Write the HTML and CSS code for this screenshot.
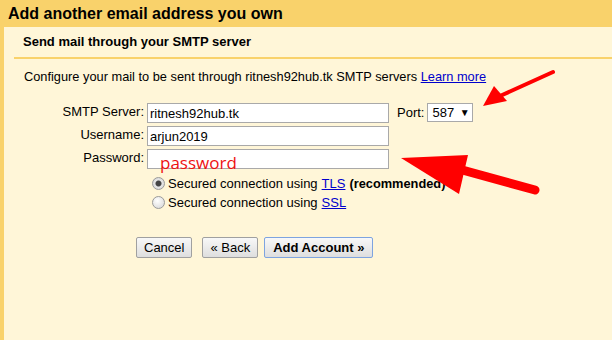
FILE: index.html
```html
<!DOCTYPE html>
<html lang="en">
<head>
  <meta charset="UTF-8">
  <title>Add another email address you own</title>
  <link rel="stylesheet" href="styles.css">
</head>
<body>

  <div class="page">
    <div class="header">Add another email address you own</div>

    <div class="content">
      <div class="subhead">Send mail through your SMTP server</div>

      <p class="intro">Configure your mail to be sent through ritnesh92hub.tk SMTP servers <a href="#">Learn more</a></p>

      <div class="form">
        <label class="label">SMTP Server:</label>
        <div class="field"><input type="text" value="ritnesh92hub.tk"></div>
        <div class="port">
          <label>Port:</label>
          <div class="select">587 <span class="caret">&#9660;</span></div>
        </div>

        <label class="label">Username:</label>
        <div class="field"><input type="text" value="arjun2019"></div>
        <div></div>

        <label class="label">Password:</label>
        <div class="field"><input type="text" value=""></div>
        <div></div>

        <div></div>
        <div class="options">
          <div class="radio-row"><span class="radio checked"></span>Secured connection using <a href="#">TLS</a> <b>(recommended)</b></div>
          <div class="radio-row"><span class="radio"></span>Secured connection using <a href="#">SSL</a></div>
        </div>
        <div></div>
      </div>

      <div class="buttons">
        <button class="btn">Cancel</button>
        <button class="btn back">&laquo; Back</button>
        <button class="btn primary">Add Account &raquo;</button>
      </div>
    </div>

    <!-- annotations drawn on top of the screenshot -->
    <span class="note">password</span>
    <svg class="arrows" width="612" height="340" viewBox="0 0 612 340">
      <line x1="553" y1="72" x2="500" y2="96" stroke="#ff0000" stroke-width="4" stroke-linecap="round"/>
      <polygon points="483,106 494,86 507,101" fill="#ff0000"/>
      <line x1="535" y1="190" x2="455" y2="168" stroke="#ff0000" stroke-width="9" stroke-linecap="round"/>
      <polygon points="401,158 468,155 459,194" fill="#ff0000"/>
    </svg>
  </div>

</body>
</html>
```

FILE: styles.css
```css
body {
  margin: 0;
  font-family: 'Liberation Sans', Arial, sans-serif;
  font-size: 13px;
  color: #000;
  background: #fff6d8;
}

.page {
  position: relative;
  height: 340px;
  border-left: 4px solid #f9d26b;
  background: #fff6d8;
  overflow: hidden;
}

.header {
  height: 27px;
  line-height: 28px;
  margin-left: -4px;
  padding-left: 8px;
  background: #f9d26b;
  font-size: 16px;
  font-weight: bold;
}

.subhead {
  margin-left: 10px;
  padding: 7px 0 8px 9px;
  border-bottom: 2px solid #f9d26b;
  font-size: 13px;
  font-weight: bold;
}

.intro {
  margin: 9px 0 0 20px;
  line-height: 18px;
  font-size: 12.8px;
}

a {
  color: #0000cc;
}

.form {
  display: grid;
  grid-template-columns: 140px 242px auto;
  column-gap: 3px;
  row-gap: 3px;
  margin-top: 17px;
  align-items: start;
}

.label {
  text-align: right;
  line-height: 18px;
}

.field input {
  box-sizing: border-box;
  width: 242px;
  height: 20px;
  margin: 0;
  padding: 0 2px;
  border: 1px solid #a9a9a9;
  background: #fff;
  font-family: 'Liberation Sans', Arial, sans-serif;
  font-size: 13px;
}

.port {
  display: flex;
  align-items: center;
  gap: 3px;
  margin-left: 5px;
}

.select {
  box-sizing: border-box;
  width: 46px;
  height: 19px;
  padding-left: 4px;
  border: 1px solid #a9a9a9;
  background: #fff;
  line-height: 17px;
  font-size: 13px;
}

.caret {
  font-size: 10px;
  vertical-align: 1px;
  margin-left: 2px;
}

.options {
  padding: 2px 0 0 5px;
  white-space: nowrap;
}

.radio-row {
  display: flex;
  align-items: center;
  height: 19px;
}

.radio {
  flex-shrink: 0;
  box-sizing: border-box;
  width: 13px;
  height: 13px;
  margin-right: 3px;
  border: 1px solid #9a9a9a;
  border-radius: 50%;
  background: radial-gradient(circle at 40% 35%, #ffffff, #d4d4d4);
}

.radio.checked {
  background: radial-gradient(circle, #444 0, #444 2.5px, #e6e6e6 3.5px, #cfcfcf 100%);
}

.radio-row b {
  margin-left: 4px;
  font-size: 12.8px;
}

.radio-row a {
  margin-left: 4px;
}

.buttons {
  display: flex;
  margin: 25px 0 0 132px;
}

.btn {
  height: 21px;
  padding: 0 7px;
  border: 1px solid #a0a0a0;
  border-radius: 2px;
  background: linear-gradient(#f8f8f8, #dedede);
  font-family: 'Liberation Sans', Arial, sans-serif;
  font-size: 13px;
  color: #000;
}

.back {
  margin-left: 10px;
}

.primary {
  margin-left: 6px;
  padding: 0 8px;
  border-color: #7ea4e0;
  font-weight: bold;
}

.note {
  position: absolute;
  left: 156px;
  top: 151px;
  font-family: 'Open Sans', 'Noto Sans', sans-serif;
  font-size: 17px;
  color: #ee1111;
}

.arrows {
  position: absolute;
  left: -4px;
  top: 0;
}
```
